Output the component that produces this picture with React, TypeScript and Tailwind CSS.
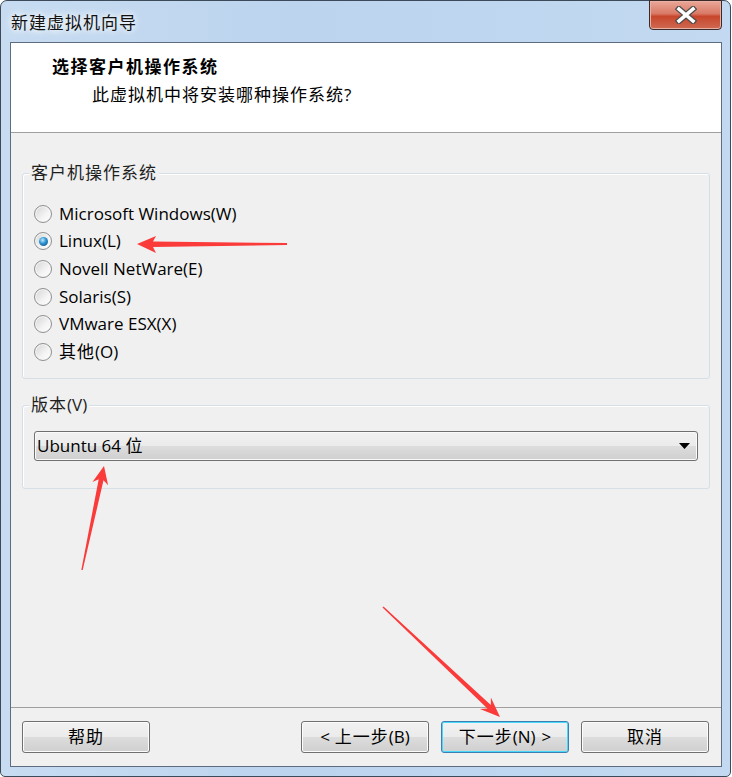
import React from 'react';

const osList = [
  { label: 'Microsoft Windows(W)', checked: false },
  { label: 'Linux(L)', checked: true },
  { label: 'Novell NetWare(E)', checked: false },
  { label: 'Solaris(S)', checked: false },
  { label: 'VMware ESX(X)', checked: false },
  { label: '其他(O)', checked: false },
];

const btn =
  'flex h-[32px] w-[128px] items-center justify-center rounded-[3px] border border-[#707070] bg-[linear-gradient(#f2f2f2_0%,#ebebeb_49%,#dddddd_50%,#cfcfcf_100%)] shadow-[inset_0_0_0_1px_#fcfcfc] text-black';

function Radio({ checked }: { checked: boolean }) {
  return (
    <span className="flex h-[18px] w-[18px] items-center justify-center rounded-full border border-[#8e8f8f] bg-[linear-gradient(135deg,#d4d4d4,#f4f4f4_60%,#ffffff)] shadow-[inset_0_0_0_1px_#f7f7f7]">
      {checked && (
        <span className="h-[9px] w-[9px] rounded-full bg-[radial-gradient(circle_at_40%_35%,#b9ecff_0%,#2a8fce_45%,#0c4873_100%)]" />
      )}
    </span>
  );
}

function GroupLabel({ children }: { children: React.ReactNode }) {
  return (
    <div className="-mt-[12px] ml-[6px] w-fit bg-[#f0f0f0] px-[2px] leading-[22px] text-[#1e1e1e]">
      {children}
    </div>
  );
}

export default function App() {
  return (
    <div className="relative h-[777px] w-[732px] bg-white font-['Open_Sans','Noto_Sans_CJK_SC',sans-serif] text-[17px] text-black">
      <div className="flex h-[777px] w-[731px] flex-col rounded-t-[7px] rounded-b-[5px] border border-[#3d4a5a] bg-[linear-gradient(90deg,#c7dcf1,#bcd4ee_40%,#c2d9f1)]">
        {/* title bar */}
        <div className="flex h-[41px] shrink-0 items-start">
          <div className="ml-[10px] mt-[10px] leading-[24px] tracking-[1px] text-[#111] [text-shadow:0_0_6px_#fff,0_0_10px_#fff]">
            新建虚拟机向导
          </div>
          <div className="ml-auto mr-[8px] -mt-[1px] flex h-[30px] w-[73px] items-center justify-center rounded-b-[4px] border border-[#3b2a2a] bg-[linear-gradient(#e9a899_0%,#d97a66_45%,#c7462c_55%,#cf6a52_100%)] shadow-[inset_0_0_0_1px_#eab0a3]">
            <svg width="22" height="18" viewBox="0 0 22 18">
              <path d="M4 3 L18 15 M18 3 L4 15" stroke="#4b4b4b" strokeWidth="6" strokeLinecap="square" />
              <path d="M4 3 L18 15 M18 3 L4 15" stroke="#ffffff" strokeWidth="3.6" strokeLinecap="square" />
            </svg>
          </div>
        </div>

        {/* client */}
        <div className="ml-[9px] flex h-[725px] w-[712px] flex-col border border-[#5d6c80] bg-[#f0f0f0]">
          <div className="h-[90px] shrink-0 border-b border-[#a0a0a0] bg-white pt-[12px]">
            <div className="ml-[41px] font-bold leading-[24px] tracking-[1.5px]">选择客户机操作系统</div>
            <div className="ml-[81px] mt-[4px] leading-[24px] tracking-[1px]">此虚拟机中将安装哪种操作系统?</div>
          </div>

          <div className="flex flex-1 flex-col px-[11px]">
            <div className="mt-[40px] rounded-[3px] border border-[#d5dfe5] pb-[12px] shadow-[inset_1px_1px_0_#fff]">
              <GroupLabel>
                <span className="tracking-[1px]">客户机操作系统</span>
              </GroupLabel>
              <div className="mt-[16px] flex flex-col pl-[11px]">
                {osList.map((os) => (
                  <div key={os.label} className="flex h-[27.6px] items-center gap-[7px]">
                    <Radio checked={os.checked} />
                    <span className="leading-[22px]">
                      {os.label === '其他(O)' ? (
                        <>
                          <span className="tracking-[1px]">其他</span>(O)
                        </>
                      ) : (
                        os.label
                      )}
                    </span>
                  </div>
                ))}
              </div>
            </div>

            <div className="mt-[26px] rounded-[3px] border border-[#d5dfe5] pb-[27px] shadow-[inset_1px_1px_0_#fff]">
              <GroupLabel>
                <span className="tracking-[1px]">版本</span>(V)
              </GroupLabel>
              <div className="ml-[11px] mr-[11px] mt-[15px] flex h-[30px] items-center rounded-[3px] border border-[#707070] bg-[linear-gradient(#f2f2f2_0%,#ebebeb_49%,#dddddd_50%,#cfcfcf_100%)] pl-[2px] pr-[7px] shadow-[inset_0_0_0_1px_#fafafa]">
                <span className="leading-[22px]">Ubuntu 64 位</span>
                <svg className="ml-auto" width="11" height="6" viewBox="0 0 11 6">
                  <path d="M0 0 H11 L5.5 6 Z" fill="#000" />
                </svg>
              </div>
            </div>
          </div>

          <div className="flex h-[59px] shrink-0 items-start border-t border-[#a0a0a0] pl-[11px] pr-[12px] pt-[13px]">
            <button className={btn}>
              <span className="tracking-[1px]">帮助</span>
            </button>
            <button className={btn + ' ml-auto'}>
              &lt; <span className="ml-[5px] tracking-[1px]">上一步</span>(B)
            </button>
            <button className="ml-[12px] flex h-[32px] w-[128px] items-center justify-center rounded-[3px] border border-[#3c7fb1] bg-[linear-gradient(#f2f2f2_0%,#ebebeb_49%,#dddddd_50%,#cfcfcf_100%)] shadow-[inset_0_0_0_1px_#48d8fb]">
              <span className="tracking-[1px]">下一步</span>(N)<span className="ml-[6px]">&gt;</span>
            </button>
            <button className={btn + ' ml-[12px]'}>
              <span className="tracking-[1px]">取消</span>
            </button>
          </div>
        </div>
      </div>

      {/* red annotation arrows */}
      <svg className="pointer-events-none absolute left-0 top-0" width="732" height="777" viewBox="0 0 732 777">
        <polygon
          points="137,244 156,236 153,241.5 287,243 287,245 153,247 156,253"
          fill="#fb3a3a"
        />
        <polygon
          points="104,466 108.1,485.3 103.5,480.2 82.7,570.1 81.3,569.9 98.7,479.2 92.5,481.9"
          fill="#fb3a3a"
        />
        <polygon
          points="500,717 479.9,709.1 487.4,708.5 382.5,607.5 383.5,606.5 490.8,704.9 490.9,697.5"
          fill="#fb3a3a"
        />
      </svg>
    </div>
  );
}
